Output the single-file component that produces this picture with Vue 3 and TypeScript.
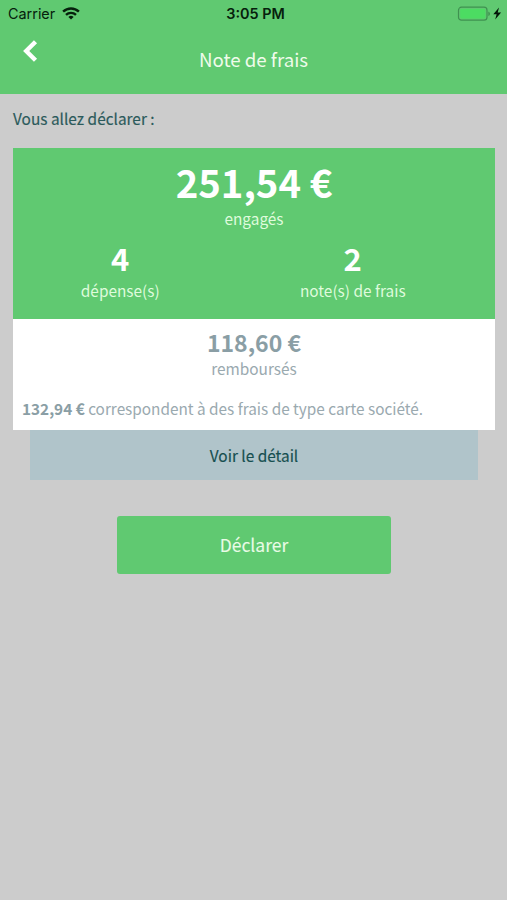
<script setup lang="ts">
interface Stat {
  value: string
  label: string
}

const total: Stat = { value: '251,54 €', label: 'engagés' }
const counts: Stat[] = [
  { value: '4', label: 'dépense(s)' },
  { value: '2', label: 'note(s) de frais' },
]
const refunded: Stat = { value: '118,60 €', label: 'remboursés' }
</script>

<template>
  <div class="screen">
    <header class="header">
      <div class="status">
        <div class="carrier">
          <span>Carrier</span>
          <svg class="wifi" width="18" height="13" viewBox="0 0 18 13" fill="none" stroke="#06200c" stroke-width="2.4">
            <path d="M1.1 4.7a11.3 11.3 0 0 1 15.8 0" />
            <path d="M4 7.9a7.2 7.2 0 0 1 10 0" />
            <path d="M9 12.6 6.4 10a3.8 3.8 0 0 1 5.2 0Z" fill="#06200c" stroke="none" />
          </svg>
        </div>
        <div class="time">3:05 PM</div>
        <div class="power">
          <svg width="46" height="16" viewBox="0 0 46 16">
            <rect x="1.5" y="1.2" width="28.5" height="13" rx="3" fill="none" stroke="#3f9150" stroke-width="1.2" />
            <rect x="3.2" y="2.9" width="25.1" height="9.6" rx="1.4" fill="#4cdc62" />
            <path d="M31.3 5.4q1.7.6 1.7 2.3t-1.7 2.3z" fill="#3f9150" />
            <path d="M42 1.5 36.3 8.3h3.3L38.2 13.5l5.9-7h-3.4z" fill="#041408" />
          </svg>
        </div>
      </div>
      <div class="nav">
        <button class="back" aria-label="Retour">
          <svg width="16" height="24" viewBox="0 0 16 24" fill="none" stroke="#fff" stroke-width="4.4">
            <path d="M13.5 2.7 4.2 12l9.3 9.3" />
          </svg>
        </button>
        <h1 class="title">Note de frais</h1>
      </div>
    </header>

    <main class="content">
      <p class="intro">Vous allez déclarer :</p>
      <section class="card">
        <div class="summary">
          <div class="amount">{{ total.value }}</div>
          <div class="label">{{ total.label }}</div>
          <div class="counts">
            <div v-for="item in counts" :key="item.label" class="count">
              <div class="number">{{ item.value }}</div>
              <div class="label">{{ item.label }}</div>
            </div>
          </div>
        </div>
        <div class="refund">
          <div class="refund-amount">{{ refunded.value }}</div>
          <div class="refund-label">{{ refunded.label }}</div>
          <p class="note"><strong>132,94 €</strong> correspondent à des frais de type carte société.</p>
        </div>
      </section>
      <button class="detail">Voir le détail</button>
      <button class="submit">Déclarer</button>
    </main>
  </div>
</template>

<style>
body {
  margin: 0;
  background: #cccccc;
}
</style>

<style scoped>
.screen {
  width: 507px;
  height: 900px;
  background: #cccccc;
  font-family: "Noto Sans CJK SC", "Noto Sans", sans-serif;
  overflow: hidden;
}

button {
  border: 0;
  padding: 0;
  font-family: inherit;
}

.header {
  height: 94px;
  background: #60c971;
}

.status {
  display: grid;
  grid-template-columns: 1fr auto 1fr;
  align-items: center;
  height: 27px;
  padding: 0 4px 0 8px;
  font-family: Inter, "Liberation Sans", sans-serif;
  font-size: 14.4px;
  color: #06200c;
}

.carrier {
  display: flex;
  align-items: center;
  gap: 7px;
}

.time {
  font-weight: 600;
}

.power {
  display: flex;
  justify-content: flex-end;
}

.power svg,
.wifi,
.back svg {
  display: block;
}

.nav {
  display: grid;
  grid-template-columns: 60px 1fr 60px;
  height: 67px;
}

.back {
  justify-self: start;
  align-self: start;
  margin: 12px 0 0 22px;
  background: none;
}

.title {
  margin: 17px 0 0;
  font-size: 18.7px;
  line-height: 30px;
  font-weight: 400;
  text-align: center;
  color: #effbea;
}

.content {
  display: flex;
  flex-direction: column;
  padding: 0 12px 0 13px;
}

.intro {
  margin: 12px 0 17px;
  font-size: 15.4px;
  line-height: 25px;
  font-weight: 400;
  color: #2b5a5b;
  -webkit-text-stroke: 0.15px currentColor;
}

.summary {
  height: 171px;
  box-sizing: border-box;
  padding-top: 10px;
  background: #60c971;
  text-align: center;
  color: #fff;
}

.amount {
  margin-bottom: 1px;
  font-size: 38.3px;
  line-height: 48px;
  font-weight: 700;
}

.label {
  font-size: 15.4px;
  line-height: 22px;
  color: #dffbdc;
}

.counts {
  display: grid;
  grid-template-columns: 1fr 1fr;
  margin-left: -9px;
  padding: 9px 26px 0 0;
}

.number {
  margin-bottom: 1px;
  font-size: 31px;
  line-height: 40px;
  font-weight: 700;
}

.refund {
  height: 111px;
  box-sizing: border-box;
  padding-top: 8px;
  background: #fff;
  text-align: center;
  color: #9aa9af;
}

.refund-amount {
  font-size: 23px;
  line-height: 30px;
  font-weight: 700;
  color: #8a9ea5;
}

.refund-label {
  font-size: 15.4px;
  line-height: 22px;
}

.note {
  margin: 18px 0 0;
  padding-left: 9px;
  font-size: 15.33px;
  line-height: 22px;
  text-align: left;
  white-space: nowrap;
}

.note strong {
  font-weight: 700;
  color: #8a9ea5;
}

.detail {
  height: 50px;
  margin: 0 17px;
  background: #b0c4ca;
  font-size: 15.4px;
  line-height: 24px;
  font-weight: 400;
  color: #164f50;
  -webkit-text-stroke: 0.15px currentColor;
}

.submit {
  align-self: center;
  width: 274px;
  height: 58px;
  margin-top: 36px;
  padding-bottom: 1px;
  border-radius: 3px;
  background: #60c971;
  font-size: 17.5px;
  color: #e9fbe6;
  -webkit-text-stroke: 0.1px currentColor;
}
</style>
